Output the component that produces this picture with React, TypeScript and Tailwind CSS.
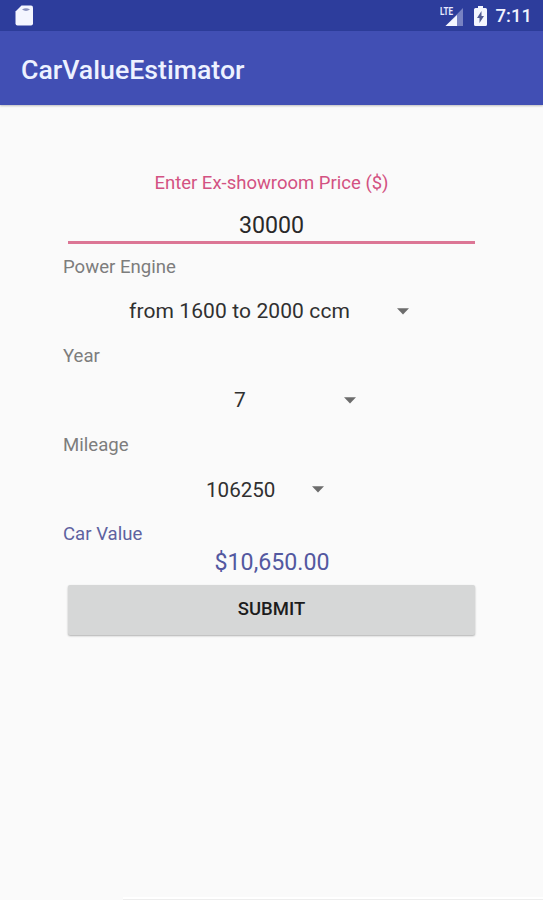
function Caret() {
  return (
    <svg className="block h-[7px] w-[12px] shrink-0" viewBox="0 0 12 7" fill="#6c6c6c">
      <path d="M0 0.3h12L6 6.6z" />
    </svg>
  );
}

type FieldProps = {
  label: string;
  value: string;
  offset: string;
  gap: string;
};

function SpinnerField({ label, value, offset, gap }: FieldProps) {
  return (
    <div className="flex h-[89px] flex-col">
      <div className="h-[26px] text-[18.6px] leading-[26px] text-[#7d7d7d]">{label}</div>
      <div className={`mt-[4px] flex h-[54px] items-center text-[#303030] ${offset} ${gap}`}>
        <span className="pt-[2px] whitespace-nowrap">{value}</span>
        <Caret />
      </div>
    </div>
  );
}

export default function App() {
  return (
    <div className="flex h-[900px] w-[543px] flex-col overflow-hidden bg-[#fafafa] font-['Roboto',sans-serif]">
      <div className="flex h-[31px] shrink-0 items-center bg-[#2d3d9c] pr-[11px] pl-[15px] text-[#f0f2ff]">
        <svg className="block h-[21px] w-[18px]" viewBox="0 0 18 21">
          <path d="M6.5 0.5H16q2 0 2 2V18.5q0 2-2 2H2.500q-2 0-2-2V6.500z" fill="#f4f6ff" />
          <path d="M7 4.500q4-2.500 8 0q-4 2.800-8 0z" fill="#8a92bd" />
        </svg>
        <div className="flex-1" />
        <svg className="mr-[10px] block h-[22px] w-[24px]" viewBox="0 0 24 22">
          <path d="M23 3V21H5.500z" fill="#7882c2" />
          <path d="M17 10V21H5.500z" fill="#f4f6ff" />
          <text x="0" y="10" fontSize="10.500" fontWeight="700" fill="#e7eaff" textLength="13" lengthAdjust="spacingAndGlyphs">LTE</text>
        </svg>
        <svg className="mr-[9px] block h-[20px] w-[13px]" viewBox="0 0 13 20">
          <path d="M4 0h5v2h2.500q1.500 0 1.500 1.500v15q0 1.500-1.500 1.500h-10Q0 20 0 18.500v-15Q0 2 1.500 2H4z" fill="#f4f6ff" />
          <path d="M7.500 5v5H10l-4.500 7v-5H3z" fill="#515b93" />
        </svg>
        <span className="pt-[2px] text-[18.5px] leading-[29px] font-medium">7:11</span>
      </div>
      <div className="flex h-[74px] shrink-0 items-center bg-[#414fb4] pt-[3px] pl-[21px] shadow-[0_1px_2px_rgba(0,0,0,0.25)]">
        <h1 className="text-[26.7px] leading-[32px] font-medium text-[#edf2ff]">CarValueEstimator</h1>
      </div>

      <div className="ml-[63px] flex w-[417px] flex-1 flex-col self-start pt-[65px]">
        <div className="h-[26px] text-center text-[18.5px] leading-[26px] text-[#d35282]">Enter Ex-showroom Price ($)</div>
        <div className="mx-[5px] mt-[14px] flex h-[34px] w-[407px] flex-col border-b-[3px] border-[#dc7695] text-center text-[23.2px] leading-[30px] text-[#292929]">
          30000
        </div>
        <div className="mt-[10px]">
          <SpinnerField label="Power Engine" value="from 1600 to 2000 ccm" offset="pl-[66px] text-[21px] tracking-[0.1px]" gap="gap-[47px]" />
          <SpinnerField label="Year" value="7" offset="pl-[171px] text-[21px]" gap="gap-[98px]" />
          <SpinnerField label="Mileage" value="106250" offset="pl-[143px] text-[20.6px]" gap="gap-[37px]" />
        </div>
        <div className="h-[26px] text-[18.6px] leading-[26px] text-[#5e62a0]">Car Value</div>
        <div className="h-[30px] pl-px text-center text-[23.2px] leading-[30px] text-[#5358a0]">$10,650.00</div>
        <button className="mx-[5px] mt-[8px] h-[50px] w-[407px] rounded-[2px] bg-[#d6d7d7] text-[18.5px] font-medium text-[#1c1c1c] shadow-[0_1px_2px_rgba(0,0,0,0.3)]">
          SUBMIT
        </button>
      </div>
      <div className="ml-[123px] h-[3px] shrink-0 border-b border-[#ededed] bg-white" />
    </div>
  );
}
